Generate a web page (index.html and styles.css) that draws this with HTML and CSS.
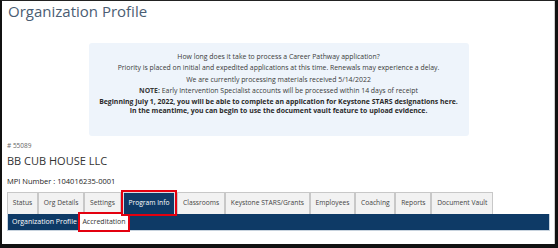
FILE: index.html
```html
<!DOCTYPE html>
<html>
<head>
<meta charset="utf-8">
<link rel="stylesheet" href="styles.css">
</head>
<body>
<div class="frame">
  <h1 class="title">Organization Profile</h1>
  <div class="notice">
    <p class="q">How long does it take to process a Career Pathway application?</p>
    <p>Priority is placed on initial and expedited applications at this time. Renewals may experience a delay.</p>
    <p>We are currently processing materials received 5/14/2022</p>
    <p><b>NOTE:</b> Early Intervention Specialist accounts will be processed within 14 days of receipt</p>
    <p class="big">Beginning July 1, 2022, you will be able to complete an application for Keystone STARS designations here.<br>In the meantime, you can begin to use the document vault feature to upload evidence.</p>
  </div>
  <div class="org-id"># 55089</div>
  <div class="org-name">BB CUB HOUSE LLC</div>
  <div class="mpi">MPI Number : 104016235-0001</div>
  <ul class="tabs">
    <li class="tab">Status</li>
    <li class="tab">Org Details</li>
    <li class="tab">Settings</li>
    <li class="tab active">Program Info</li>
    <li class="tab">Classrooms</li>
    <li class="tab">Keystone STARS/Grants</li>
    <li class="tab">Employees</li>
    <li class="tab">Coaching</li>
    <li class="tab">Reports</li>
    <li class="tab">Document Vault</li>
  </ul>
  <div class="subbar">
    <span class="sub">Organization Profile</span>
    <span class="sub current">Accreditation</span>
  </div>
</div>
</body>
</html>
```
FILE: styles.css
```css
html, body {
  margin: 0;
  padding: 0;
  background: #fff;
}
body {
  width: 558px;
  height: 248px;
  overflow: hidden;
  font-family: "Open Sans", "Noto Sans", sans-serif;
}
.frame {
  box-sizing: border-box;
  width: 558px;
  height: 248px;
  border-top: 1px solid #222;
  border-left: 2px solid #111;
  border-right: 3px solid #111;
  border-bottom: 4px solid #111;
  padding: 1px 5px 0 5px;
  box-shadow: inset -1px 0 0 #cfcfcf;
}
.title {
  margin: 0;
  font-size: 15px;
  line-height: 18px;
  font-weight: 400;
  color: #4a5d73;
  padding-left: 1px;
}
.notice {
  width: 380px;
  margin: 23px auto 0;
  background: #eef4fb;
  border-radius: 3px;
  padding: 8px 0 21px;
  text-align: center;
  color: #3a3a3a;
}
.notice p {
  margin: 0;
  font-size: 6.9px;
  line-height: 11.4px;
}
.notice p.big {
  font-size: 6.9px;
  font-weight: 700;
  line-height: 9px;
  color: #2a2a2a;
}
.org-id {
  margin-top: 6px;
  font-size: 6.5px;
  line-height: 8px;
  color: #666;
}
.org-name {
  margin-top: 4px;
  font-size: 11px;
  line-height: 13px;
  color: #333;
}
.mpi {
  margin-top: 9px;
  font-size: 7.5px;
  line-height: 10px;
  color: #222;
}
.tabs {
  list-style: none;
  margin: 6px 0 0;
  padding: 0;
  display: flex;
  height: 22px;
}
.tab {
  box-sizing: border-box;
  height: 22px;
  padding: 0 4.8px;
  font-size: 6.7px;
  line-height: 20px;
  color: #444;
  background: #f2f2f2;
  border: 1px solid #c8c8c8;
  border-bottom: none;
}
.tab.active {
  background: #0e3a66;
  color: #fff;
  border: 1px solid #d8dde4;
  border-bottom: none;
  outline: 2px solid #e3000f;
  margin: 0 2px;
  position: relative;
  z-index: 2;
}
.subbar {
  display: flex;
  align-items: center;
  height: 17px;
  background: #0e3a66;
  border: 1px solid #c8d3de;
  border-top: none;
  box-sizing: border-box;
}
.sub {
  font-size: 7px;
  color: #fff;
  padding: 0 3px 0 4px;
  line-height: 16px;
}
.sub.current {
  background: #fff;
  color: #333;
  padding: 0 2.5px;
  outline: 2px solid #e3000f;
}
```
